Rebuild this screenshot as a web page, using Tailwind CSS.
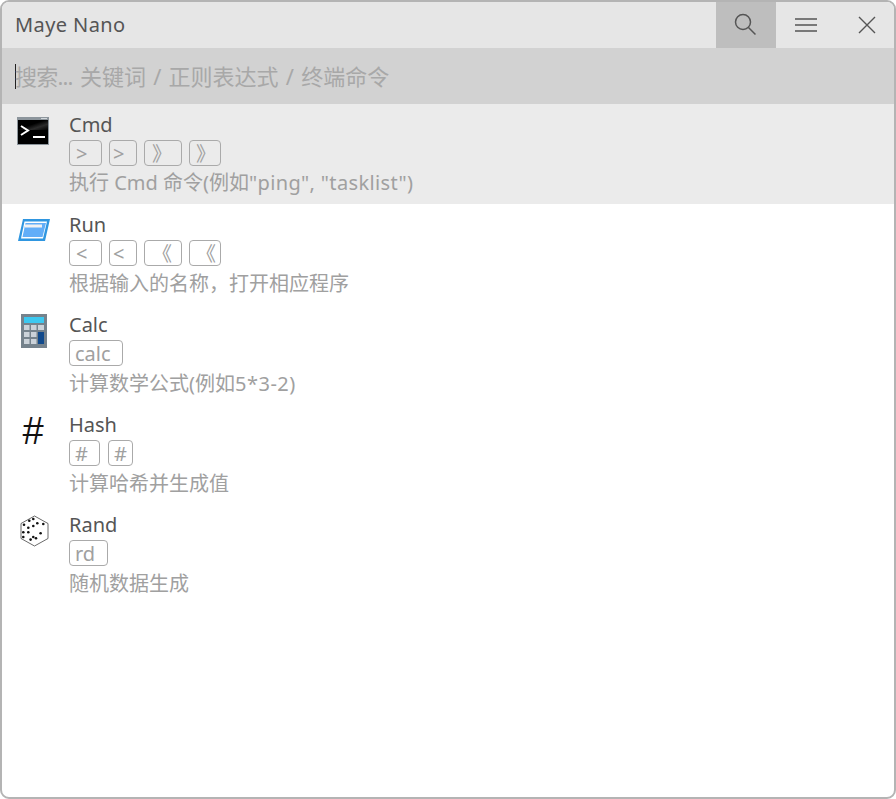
<!DOCTYPE html>
<html lang="zh-CN">
<head>
    <meta charset="UTF-8">
    <title>Maye Nano</title>
    <script src="https://cdn.jsdelivr.net/npm/@tailwindcss/browser@4"></script>
</head>
<body class="bg-white">
    <div class="w-[896px] h-[799px] flex flex-col border-2 border-[#b4b4b4] rounded-[9px] overflow-hidden bg-white font-['Noto_Sans','Noto_Sans_CJK_SC',sans-serif] text-[20px]">

        <!-- title bar -->
        <div class="h-[46px] shrink-0 flex items-center bg-[#e6e6e6]">
            <div class="flex-1 pl-[13px] text-[#555555] leading-[46px] tracking-[0.4px]">Maye Nano</div>
            <button class="w-[60px] h-[46px] flex items-center justify-center bg-[#bebebe]">
                <svg class="ml-[-2px]" width="26" height="26" viewBox="0 0 26 26" fill="none" stroke="#555555" stroke-width="1.5"><circle cx="11" cy="10" r="7.500"/><path d="M16.500 15.500l7 7"/></svg>
            </button>
            <button class="w-[60px] h-[46px] flex items-center justify-center">
                <svg width="22" height="16" viewBox="0 0 22 16" fill="none" stroke="#555555" stroke-width="1.5"><path d="M0 2h22M0 8h22M0 14h22"/></svg>
            </button>
            <button class="w-[58px] h-[46px] flex items-center justify-center">
                <svg class="ml-[3px]" width="18" height="18" viewBox="0 0 18 18" fill="none" stroke="#555555" stroke-width="1.4"><path d="M1 1l16 16M17 1L1 17"/></svg>
            </button>
        </div>

        <!-- search -->
        <div class="h-[56px] shrink-0 flex items-center bg-[#d2d2d2] pl-[13px]">
            <div class="h-[25px] border-l-[1.5px] border-[#222222]"></div>
            <div class="text-[22px] text-[#a8a8a8] leading-[25px] ml-[-1px] [word-spacing:1.5px]"><span class="tracking-[-0.8px]">搜索...</span> 关键词 / 正则表达式 / 终端命令</div>
        </div>

        <!-- list -->
        <div class="flex-1">
            <div class="h-[100px] flex bg-[#ebebeb]">
                <div class="w-[67px] shrink-0 pl-[15px] pt-[13px]">
                    <svg width="32" height="28" viewBox="0 0 32 28">
                        <defs><linearGradient id="cmdBg" x1="0" y1="0" x2="1" y2="1"><stop offset="0" stop-color="#000000"/><stop offset="0.45" stop-color="#000000"/><stop offset="0.7" stop-color="#2c2c2c"/><stop offset="1" stop-color="#000000"/></linearGradient></defs>
                        <rect x="0" y="0" width="32" height="28" fill="#8c959c"/>
                        <rect x="1" y="3" width="30" height="24" fill="#000000"/>
                        <rect x="1" y="3" width="30" height="10" fill="url(#cmdBg)"/>
                        <path d="M4 9l7 4.500L4 18" fill="none" stroke="#ffffff" stroke-width="2"/>
                        <path d="M16 20h12" stroke="#ffffff" stroke-width="2"/>
                        <path d="M24 1.500h6" stroke="#d2d7db" stroke-width="1"/>
                    </svg>
                </div>
                <div class="flex flex-col">
                    <div class="h-[36px] pt-[7px] leading-[28px] text-[#555555]">Cmd</div>
                    <div class="flex gap-[7px] h-[26px]">
                        <div class="w-[33px] h-[26px] border border-[#aaaaaa] rounded-[4px] text-[#a0a0a0] leading-[25px] pl-[6px]">&gt;</div>
                        <div class="w-[28px] h-[26px] border border-[#aaaaaa] rounded-[4px] text-[#a0a0a0] leading-[25px] pl-[3px]">&gt;</div>
                        <div class="w-[38px] h-[26px] border border-[#aaaaaa] rounded-[4px] text-[#a0a0a0] leading-[25px] pl-[7px]">》</div>
                        <div class="w-[32px] h-[26px] border border-[#aaaaaa] rounded-[4px] text-[#a0a0a0] leading-[25px] pl-[6px]">》</div>
                    </div>
                    <div class="leading-[28px] mt-[3px] text-[#a0a0a0]">执行 Cmd 命令(例如<span class="tracking-[0.35px]">"ping", "tasklist"</span>)</div>
                </div>
            </div>

            <div class="h-[100px] flex">
                <div class="w-[67px] shrink-0 pl-[16px] pt-[13px]">
                    <svg width="32" height="26" viewBox="0 0 32 26">
                        <path d="M5 2h27l-5 22H0z" fill="#2f96e0"/>
                        <path d="M6.500 4.500h22.500l-4 17H3z" fill="#ffffff"/>
                        <path d="M7.500 6h20.500l-3.500 14H4.500z" fill="#62aef8"/>
                        <rect x="7" y="7.500" width="17" height="3" fill="#f2f2f2"/>
                    </svg>
                </div>
                <div class="flex flex-col">
                    <div class="h-[36px] pt-[7px] leading-[28px] text-[#555555]">Run</div>
                    <div class="flex gap-[7px] h-[26px]">
                        <div class="w-[33px] h-[26px] border border-[#aaaaaa] rounded-[4px] text-[#a0a0a0] leading-[25px] pl-[6px]">&lt;</div>
                        <div class="w-[28px] h-[26px] border border-[#aaaaaa] rounded-[4px] text-[#a0a0a0] leading-[25px] pl-[3px]">&lt;</div>
                        <div class="w-[38px] h-[26px] border border-[#aaaaaa] rounded-[4px] text-[#a0a0a0] leading-[25px] pl-[7px]">《</div>
                        <div class="w-[32px] h-[26px] border border-[#aaaaaa] rounded-[4px] text-[#a0a0a0] leading-[25px] pl-[6px]">《</div>
                    </div>
                    <div class="leading-[28px] mt-[4px] text-[#a0a0a0]">根据输入的名称，打开相应程序</div>
                </div>
            </div>

            <div class="h-[100px] flex">
                <div class="w-[67px] shrink-0 pl-[19px] pt-[10px]">
                    <svg width="26" height="34" viewBox="0 0 26 34">
                        <rect width="26" height="34" fill="#75828c"/>
                        <rect x="3" y="3" width="20" height="6" fill="#3cc8f0"/>
                        <g fill="#cbd2d9">
                            <rect x="3" y="11" width="5.500" height="5"/><rect x="10" y="11" width="5.500" height="5"/><rect x="17" y="11" width="6" height="5"/>
                            <rect x="3" y="18" width="5.500" height="5"/><rect x="10" y="18" width="5.500" height="5"/>
                            <rect x="3" y="25" width="5.500" height="5"/><rect x="10" y="25" width="5.500" height="5"/>
                        </g>
                        <rect x="17" y="18" width="6" height="12" fill="#114a8c"/>
                    </svg>
                </div>
                <div class="flex flex-col">
                    <div class="h-[36px] pt-[7px] leading-[28px] text-[#555555]">Calc</div>
                    <div class="flex gap-[7px] h-[26px]">
                        <div class="w-[54px] h-[26px] border border-[#aaaaaa] rounded-[4px] text-[#a0a0a0] leading-[25px] pl-[5px]">calc</div>
                    </div>
                    <div class="leading-[28px] mt-[4px] text-[#a0a0a0]">计算数学公式(例如<span class="tracking-[0.5px]">5*3-2</span>)</div>
                </div>
            </div>

            <div class="h-[100px] flex">
                <div class="w-[67px] shrink-0 pl-[20px] pt-[5px]">
                    <span class="font-['Liberation_Sans'] italic text-[38px] leading-[44px] text-[#111111]">#</span>
                </div>
                <div class="flex flex-col">
                    <div class="h-[36px] pt-[7px] leading-[28px] text-[#555555]">Hash</div>
                    <div class="flex gap-[8px] h-[26px]">
                        <div class="w-[31px] h-[26px] border border-[#aaaaaa] rounded-[4px] text-[#a0a0a0] leading-[25px] pl-[5px]">#</div>
                        <div class="w-[25px] h-[26px] border border-[#aaaaaa] rounded-[4px] text-[#a0a0a0] leading-[25px] pl-[5px]">#</div>
                    </div>
                    <div class="leading-[28px] mt-[4px] text-[#a0a0a0]">计算哈希并生成值</div>
                </div>
            </div>

            <div class="h-[100px] flex">
                <div class="w-[67px] shrink-0 pl-[18px] pt-[11px]">
                    <svg width="30" height="32" viewBox="0 0 30 32">
                        <path d="M14.500 1l13.500 7.500v15L14.500 31 1 23.500v-15z" fill="#ffffff" stroke="#444444" stroke-width="0.8"/>
                        <g fill="#111111">
                            <circle cx="9.300" cy="5.700" r="1.300"/><circle cx="13.300" cy="4" r="1.300"/><circle cx="4" cy="9.700" r="1.300"/>
                            <circle cx="17.300" cy="8.300" r="1.300"/><circle cx="13.300" cy="11" r="1.300"/><circle cx="8.300" cy="12.700" r="1.300"/>
                            <circle cx="3.300" cy="17.300" r="1.300"/><circle cx="3.300" cy="22" r="1.300"/><circle cx="8.300" cy="17.300" r="1.300"/>
                            <circle cx="13.300" cy="22" r="1.300"/><circle cx="10.600" cy="24.600" r="1.300"/>
                            <circle cx="23.300" cy="9" r="1.300"/><circle cx="20.600" cy="18.300" r="1.300"/><circle cx="16" cy="23.300" r="1.300"/>
                        </g>
                    </svg>
                </div>
                <div class="flex flex-col">
                    <div class="h-[36px] pt-[7px] leading-[28px] text-[#555555]">Rand</div>
                    <div class="flex gap-[7px] h-[26px]">
                        <div class="w-[39px] h-[26px] border border-[#aaaaaa] rounded-[4px] text-[#a0a0a0] leading-[25px] pl-[5px]">rd</div>
                    </div>
                    <div class="leading-[28px] mt-[4px] text-[#a0a0a0]">随机数据生成</div>
                </div>
            </div>
        </div>
    </div>
</body>
</html>
